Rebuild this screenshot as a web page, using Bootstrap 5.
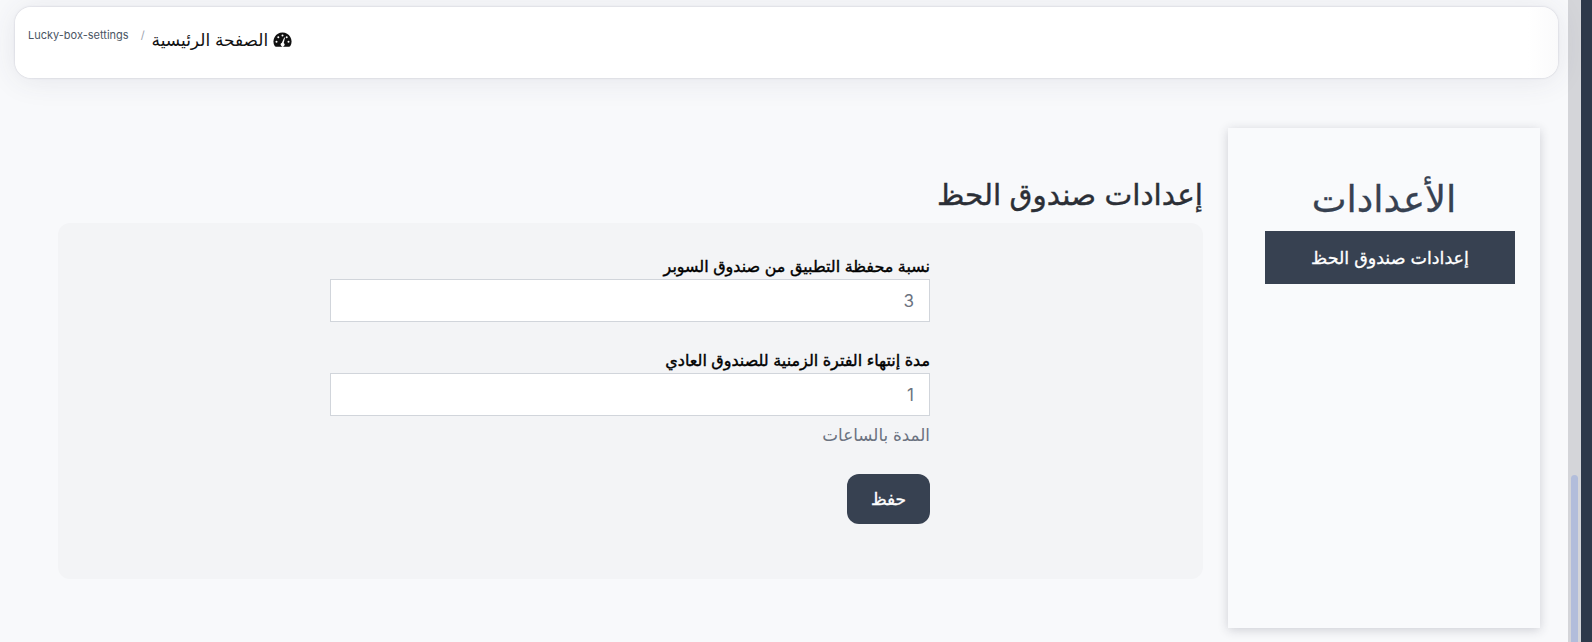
<!DOCTYPE html>
<html lang="ar" dir="rtl">
<head>
<meta charset="utf-8">
<title>Lucky box settings</title>
<link href="https://cdn.jsdelivr.net/npm/bootstrap@5.3.0/dist/css/bootstrap.min.css" rel="stylesheet">
<style>
html,body{height:642px;overflow:hidden}
body{font-family:Inter,"Noto Sans","DejaVu Sans",sans-serif;background:#f8f9fb;color:#212529}
.shell{height:642px}
.main-area{flex:1 1 auto;min-width:0;padding:7px 10px 0 15px}
.top-strip{height:71px;background:linear-gradient(to left,#fafafb,#fff 30px);border-radius:16px;box-shadow:0 0 2px rgba(60,60,90,.25),0 2px 30px rgba(60,60,90,.1);padding:0 13px}
.crumb-page{font-size:11px;color:#4b5563;padding-top:20px}
.crumb-sep{font-size:11px;color:#9ca3af;padding:20px 7px 0 12px}
.crumb-home{font-size:17px;color:#111;padding-top:21px}
.home-icon{width:19px;height:16px;vertical-align:-2px;margin-left:0}
.content-row{margin-top:50px;padding-left:43px;padding-right:18px;gap:25px}
.side-panel{width:312px;height:500px;background:#f9fafc;box-shadow:0 2px 10px rgba(40,40,60,.2);padding:46px 25px 0 37px}
.side-title{font-size:37px;font-weight:400;color:#374151;text-align:center;margin:0 0 7px -12px;line-height:50px;-webkit-text-stroke:.3px #374151}
.side-btn{height:53px;background:#374151;color:#fff;font-size:17.500px;display:flex;align-items:center;justify-content:center;-webkit-text-stroke:.3px #fff;padding-top:1px}
.form-col{flex:1 1 auto;min-width:0;padding-top:45px}
.form-title{font-size:29.500px;font-weight:400;color:#2b2f36;margin:0 0 6px;line-height:42px;padding-bottom:2px;-webkit-text-stroke:.4px #2b2f36}
.form-box{height:356px;background:#f3f4f6;border-radius:12px;padding:32px 273px 0 0}
.field-label{font-size:16px;font-weight:400;color:#000;line-height:22px;padding-bottom:2px;display:block;-webkit-text-stroke:.4px #000}
.field-input.form-control{width:600px;height:43px;border:1px solid #d1d5db;border-radius:0;font-size:17px;color:#6b7280;padding:0 15px;text-align:right;background:#fff}
.field-gap{margin-bottom:27px}
.field-help{font-size:16.800px;color:#6b7280;margin-top:7px;line-height:24px}
.save-btn.btn{width:83px;height:50px;background:#374151;color:#fff;border:0;border-radius:12px;font-size:17px;font-weight:400;margin-top:27px;padding-top:8px;-webkit-text-stroke:.35px #fff}
.track{width:13px;background:#d4d5d9;flex:none;padding:475px 3px 0}
.thumb{height:167px;background:#b2bddb;border-radius:4px 4px 0 0}
.dark-edge{width:11px;background:#2e394a;flex:none}
</style>
</head>
<body>
<div class="shell d-flex">
  <div class="dark-edge"></div>
  <div class="track"><div class="thumb"></div></div>
  <div class="main-area">
    <div class="top-strip d-flex align-items-start" dir="ltr">
      <span class="crumb-page">Lucky-box-settings</span>
      <span class="crumb-sep">/</span>
      <span class="crumb-home" dir="rtl"><svg class="home-icon" viewBox="0 0 18 16" aria-hidden="true"><path fill="#111" fill-rule="evenodd" d="M9 0.500a9 9 0 0 0-7.800 13.500c.3.500.8.8 1.300.8h13c.5 0 1-.3 1.300-.8A9 9 0 0 0 9 .5Zm0 2a1 1 0 1 1 0 2 1 1 0 0 1 0-2ZM4.800 4.300a1 1 0 1 1 0 2 1 1 0 0 1 0-2Zm8.400 0a1 1 0 1 1 0 2 1 1 0 0 1 0-2ZM3 8.700a1 1 0 1 1 0 2 1 1 0 0 1 0-2Zm12 0a1 1 0 1 1 0 2 1 1 0 0 1 0-2ZM10.700 5.500l.8.300-1.300 5.200a1.900 1.900 0 1 1-1.800-.2L10.700 5.500Z"/></svg> الصفحة الرئيسية</span>
    </div>
    <div class="content-row d-flex">
      <div class="side-panel flex-shrink-0">
        <h2 class="side-title">الأعدادات</h2>
        <div class="side-btn">إعدادات صندوق الحظ</div>
      </div>
      <div class="form-col">
        <h3 class="form-title">إعدادات صندوق الحظ</h3>
        <form class="form-box">
          <div class="field-gap">
            <label class="field-label">نسبة محفظة التطبيق من صندوق السوبر</label>
            <input class="form-control field-input" type="text" value="3">
          </div>
          <div>
            <label class="field-label">مدة إنتهاء الفترة الزمنية للصندوق العادي</label>
            <input class="form-control field-input" type="text" value="1">
            <div class="field-help">المدة بالساعات</div>
          </div>
          <button class="btn save-btn" type="button">حفظ</button>
        </form>
      </div>
    </div>
  </div>
</div>
<script src="https://cdn.jsdelivr.net/npm/bootstrap@5.3.0/dist/js/bootstrap.bundle.min.js"></script>
</body>
</html>
